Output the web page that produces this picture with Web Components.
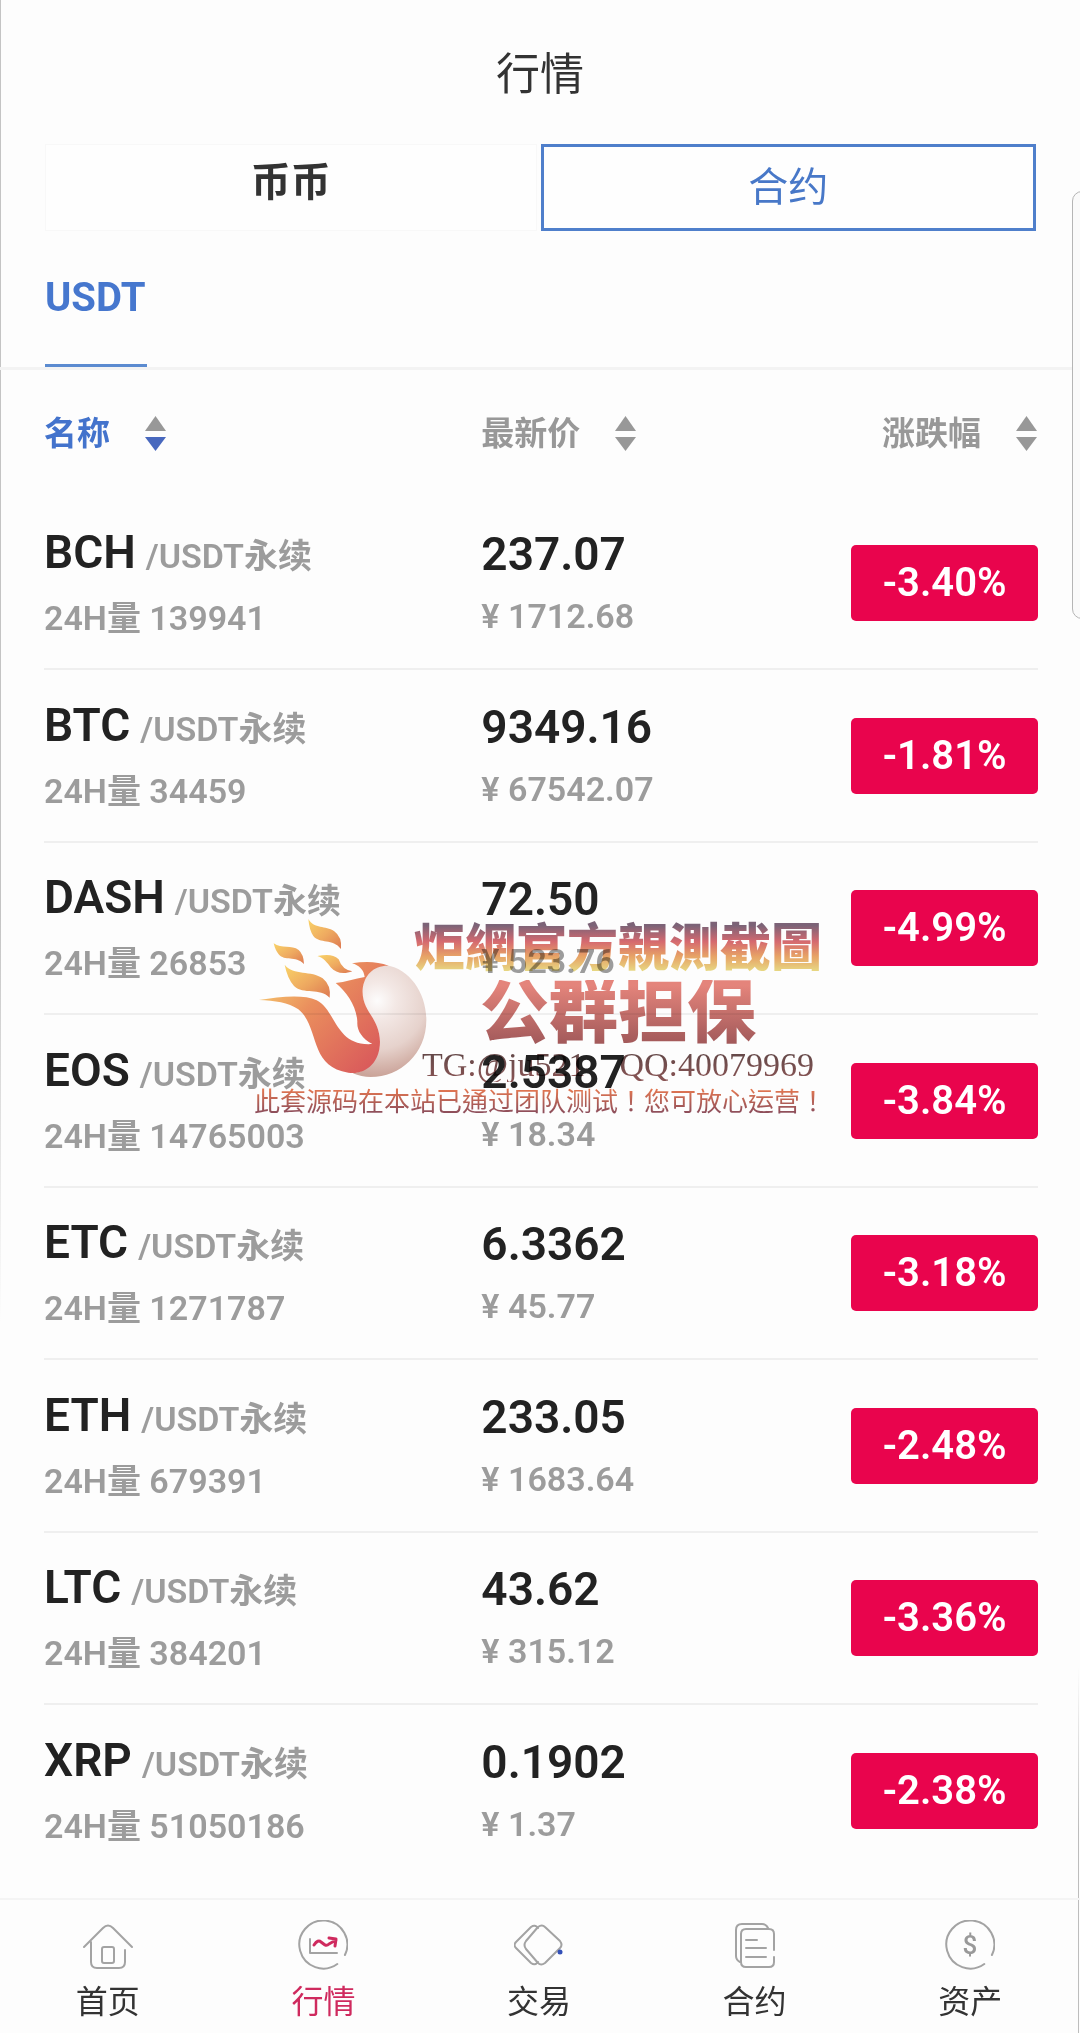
<!DOCTYPE html>
<html lang="zh-CN">
<head>
<meta charset="utf-8">
<meta name="viewport" content="width=device-width, initial-scale=1">
<title>行情</title>
<style>
  html { background: #fdfdfd; }
  body {
    margin: 0;
    background: #fdfdfd;
    color: #222;
    font-family: Roboto, "Noto Sans CJK SC", sans-serif;
  }
</style>
</head>
<body>
<market-app></market-app>
<script>
const define = (name, html, setup) => {
  const template = document.createElement('template');
  template.innerHTML = html;
  customElements.define(name, class extends HTMLElement {
    constructor() {
      super();
      this.attachShadow({ mode: 'open' }).append(template.content.cloneNode(true));
    }
    connectedCallback() { if (setup) setup(this, this.shadowRoot); }
  });
};

define('page-title', `
  <style>
    :host { display: block; }
    h1 { margin: 0; padding: 43px 0 37px; font-size: 44px; line-height: 64px; font-weight: 400; text-align: center; color: #333; }
  </style>
  <h1><slot></slot></h1>`);

define('market-switch', `
  <style>
    :host { display: flex; gap: 4px; margin: 0 44px 0 45px; }
    button {
      flex: 1; height: 87px; padding: 0; box-sizing: border-box;
      font: 400 40px/60px Roboto, "Noto Sans CJK SC", sans-serif;
      border: 1px solid #f8f8f8; background: #fefefe; color: #333;
    }
    button[aria-pressed="false"] { font-weight: 700; padding-bottom: 10px; }
    button[aria-pressed="true"] { border: 3px solid #4f7fcb; color: #4878c8; }
  </style>
  <button type="button" aria-pressed="false">币币</button><button type="button" aria-pressed="true">合约</button>`);

define('quote-tabs', `
  <style>
    :host { display: flex; padding: 0 45px; margin-top: 38px; border-bottom: 3px solid #f3f3f3; }
    button {
      height: 98px; padding: 0 2px 38px 0; border: 0; border-bottom: 3px solid #5b8bd0; background: none;
      font: 700 40px/56px Roboto, sans-serif; color: #4677ce;
    }
  </style>
  <button type="button"><slot></slot></button>`);

define('sort-button', `
  <style>
    :host { display: inline-flex; color: #989898; }
    :host([active]) { color: #4373cc; }
    button {
      display: flex; align-items: center; gap: 34px; padding: 0; border: 0; background: none; color: inherit;
      font: 700 33px/48px Roboto, "Noto Sans CJK SC", sans-serif;
    }
    svg { display: block; width: 23px; height: 36px; }
    .up, .down { fill: #989898; }
    :host([active]) .down { fill: #4868be; }
  </style>
  <button type="button"><span><slot></slot></span>
    <svg viewBox="0 0 23 36" aria-hidden="true"><path class="up" d="M11.5 0L22 15H1z"/><path class="down" d="M1 21H22L11.5 35z"/></svg>
  </button>`);

define('pair-name', `
  <style>
    :host { display: block; white-space: nowrap; }
    .name { display: flex; align-items: baseline; gap: 10px; font-size: 46px; line-height: 56px; font-weight: 600; color: #222; }
    .quote, .volume { font-size: 34px; font-weight: 600; color: #9c9c9c; }
    .volume { line-height: 48px; margin-top: 10px; }
  </style>
  <div class="name"><span class="base"></span><span class="quote">/USDT永续</span></div>
  <div class="volume"></div>`, (el, root) => {
    root.querySelector('.base').textContent = el.getAttribute('base');
    root.querySelector('.volume').textContent = '24H量 ' + el.getAttribute('volume');
  });

define('price-pair', `
  <style>
    :host { display: block; white-space: nowrap; }
    .last { font-size: 46px; line-height: 56px; font-weight: 600; color: #222; }
    .cny { font-size: 34px; line-height: 48px; margin-top: 10px; font-weight: 600; color: #9c9c9c; }
  </style>
  <div class="last"></div>
  <div class="cny"></div>`, (el, root) => {
    root.querySelector('.last').textContent = el.getAttribute('last');
    root.querySelector('.cny').textContent = '¥ ' + el.getAttribute('cny');
  });

define('change-badge', `
  <style>
    :host {
      display: inline-block; box-sizing: border-box; width: 187px; height: 76px; border-radius: 5px;
      background: #e9044d; color: #fff; text-align: center; font-size: 40px; line-height: 76px; font-weight: 600;
    }
  </style>
  <slot></slot>`);

define('market-table', `
  <style>
    :host { display: block; padding: 0 42px 0 44px; }
    table { width: 100%; border-collapse: separate; border-spacing: 0; table-layout: fixed; }
    th { height: 128px; padding: 0; text-align: left; vertical-align: middle; }
    th:nth-child(1) { width: 44%; }
    th:nth-child(2) { width: 34%; }
    th:last-child, td:last-child { text-align: right; }
    td { height: 170px; box-sizing: content-box; padding: 0; vertical-align: middle; border-bottom: 2px solid #efefef; }
    tr:nth-child(even) td { height: 171px; }
    td > * { vertical-align: middle; }
    tr:last-child td { border-bottom-color: transparent; }
  </style>
  <table>
    <thead><tr>
      <th scope="col"><sort-button active>名称</sort-button></th>
      <th scope="col"><sort-button>最新价</sort-button></th>
      <th scope="col"><sort-button>涨跌幅</sort-button></th>
    </tr></thead>
    <tbody></tbody>
  </table>`, (el, root) => {
    const rows = [
      ['BCH', '139941', '237.07', '1712.68', '-3.40%'],
      ['BTC', '34459', '9349.16', '67542.07', '-1.81%'],
      ['DASH', '26853', '72.50', '523.76', '-4.99%'],
      ['EOS', '14765003', '2.5387', '18.34', '-3.84%'],
      ['ETC', '1271787', '6.3362', '45.77', '-3.18%'],
      ['ETH', '679391', '233.05', '1683.64', '-2.48%'],
      ['LTC', '384201', '43.62', '315.12', '-3.36%'],
      ['XRP', '51050186', '0.1902', '1.37', '-2.38%']
    ];
    root.querySelector('tbody').innerHTML = rows.map(([base, volume, last, cny, change]) => `
      <tr>
        <td><pair-name base="${base}" volume="${volume}"></pair-name></td>
        <td><price-pair last="${last}" cny="${cny}"></price-pair></td>
        <td><change-badge>${change}</change-badge></td>
      </tr>`).join('');
  });

define('nav-item', `
  <style>
    :host { display: flex; flex: 1; justify-content: center; color: #333; }
    :host([active]) { color: #cf2a5e; }
    a {
      display: flex; flex-direction: column; align-items: center; gap: 8px; padding-top: 20px;
      color: inherit; text-decoration: none; font-size: 32px; line-height: 48px;
    }
  </style>
  <a href="#"><slot name="icon"></slot><span><slot></slot></span></a>`);

define('bottom-nav', `
  <style>
    :host { display: block; margin-top: auto; border-top: 2px solid #f4f4f4; }
    nav { display: flex; height: 133px; padding-right: 2px; }
    svg { display: block; width: 50px; height: 50px; fill: none; stroke: #a3a3a3; stroke-width: 2; stroke-linecap: round; stroke-linejoin: round; }
    svg text { font: 500 26px Roboto, sans-serif; fill: #999; stroke: none; text-anchor: middle; }
  </style>
  <nav>
    <nav-item>首页<svg slot="icon" viewBox="0 0 50 50"><path d="M1 27 20 8q5-5 10 0L49 27M8 22V42q0 6 6 6H36q6 0 6-6V30"/><rect x="19" y="27" width="12" height="16" rx="2"/></svg></nav-item>
    <nav-item active>行情<svg slot="icon" viewBox="0 0 50 50"><path d="M39.3 44A24 24 0 1 1 46.9 35"/><path d="M12 19V33H39"/><path stroke="#cf2a5e" stroke-width="3" d="M16 25Q20 19 23 22L27 25Q29 26 31 24L38 20M31 18L38 19L37 26"/></svg></nav-item>
    <nav-item>交易<svg slot="icon" viewBox="0 0 50 50"><path d="M24 8q-3-4-7-1L2 22q-3 3 0 6L17 43q4 3 7-1"/><path d="M24 7q4-3 7 0L46 21q3 4 0 7L31 43q-4 3-7 0L12 29q-3-4 0-8z"/><circle cx="46" cy="32" r="2.5" fill="#3350b8" stroke="none"/></svg></nav-item>
    <nav-item>合约<svg slot="icon" viewBox="0 0 50 50"><path d="M10 42q-4-2-4-6V10q0-6 6-6H32q4 0 6 4"/><path d="M44 30V14q0-5-5-5H16q-5 0-5 5V42q0 5 5 5H39q5 0 5-5V37M16 20H27M16 28H36M16 37H36"/></svg></nav-item>
    <nav-item>资产<svg slot="icon" viewBox="0 0 50 50"><path d="M39.3 44A24 24 0 1 1 46.9 35"/><text x="25" y="34">$</text></svg></nav-item>
  </nav>`);

define('flame-logo', `
  <style>
    :host { display: block; }
    svg { display: block; width: 170px; height: 160px; }
  </style>
  <svg viewBox="54 54 510 480" aria-hidden="true">
    <defs>
      <linearGradient id="fire" gradientUnits="userSpaceOnUse" x1="100" y1="180" x2="420" y2="480">
        <stop offset="0" stop-color="#fad36f"/><stop offset=".4" stop-color="#ec8f5e"/><stop offset="1" stop-color="#db5a5c"/>
      </linearGradient>
      <linearGradient id="spark" x1="0" y1="0" x2="1" y2="1">
        <stop offset="0" stop-color="#fbd568"/><stop offset=".5" stop-color="#f1ae62"/><stop offset="1" stop-color="#df7a52"/>
      </linearGradient>
      <radialGradient id="ball" gradientUnits="userSpaceOnUse" cx="412" cy="302" r="225">
        <stop offset="0" stop-color="#fffefe"/><stop offset=".25" stop-color="#f5eae7"/><stop offset=".65" stop-color="#e8d4ce"/><stop offset="1" stop-color="#cda69b"/>
      </radialGradient>
    </defs>
    <path fill="url(#ball)" d="M440 196C510 208 559 280 559 360C559 462 480 531 392 531Q364 531 338 520C390 512 420 470 420 425C418 350 365 340 368 270C370 230 392 196 440 196z"/>
    <path fill="url(#fire)" d="M57 300C120 290 190 282 230 301C290 332 285 440 397 432C365 415 350 390 352 365C350 320 320 275 287 249C315 247 345 236 374 231C372 210 357 196 336 190C375 183 412 184 446 197C400 196 372 226 368 268C364 335 418 350 420 425C420 490 375 525 325 518C205 500 240 380 175 328C145 307 105 302 57 300z"/>
    <path fill="url(#spark)" d="M134 194C160 228 215 210 248 235Q274 256 269 293C240 262 190 285 162 258Q142 235 134 194z"/>
    <path fill="url(#spark)" d="M101 130C125 148 155 134 176 150Q191 163 192 192C166 166 134 185 116 163Q106 151 101 130z"/>
    <path fill="url(#spark)" d="M205 57C223 88 257 76 282 93Q307 111 303 147C278 114 240 133 220 108Q208 91 205 57z"/>
    <path fill="url(#spark)" d="M232 168C258 164 280 162 296 178Q307 210 337 214C312 224 287 220 272 202C262 188 250 173 232 168z"/>
  </svg>`);

define('water-mark', `
  <style>
    :host {
      position: absolute; top: 918px; left: 0; right: 0; display: flex; flex-direction: column; align-items: center;
      mix-blend-mode: multiply; pointer-events: none; white-space: nowrap;
    }
    .top { display: flex; height: 164px; }
    .lines { display: flex; flex-direction: column; align-items: center; margin-left: -14px; }
    .lines > *, .note { background-clip: text; -webkit-background-clip: text; color: transparent; }
    .site { font-size: 51px; line-height: 62px; font-weight: 900; background-image: linear-gradient(#7d6478 12%, #d76a70 38%, #e9a467 62%, #e9df87 88%); }
    .group { font-size: 69px; line-height: 68px; font-weight: 900; background-image: linear-gradient(#e6857c 8%, #a35a5b 94%); }
    .contact { font: 34px/34px "Liberation Serif", serif; background-image: linear-gradient(#5d4646, #8c5555); white-space: pre; }
    .note { font: 26px/36px "Noto Sans CJK TC", sans-serif; background-image: linear-gradient(#ec7b50 15%, #8e4e5c 85%); }
  </style>
  <div class="top">
    <flame-logo></flame-logo>
    <div class="lines">
      <div class="site" lang="zh-TW">炬網官方親測截圖</div>
      <div class="group">公群担保</div>
      <div class="contact">TG:@ju521    QQ:40079969</div>
    </div>
  </div>
  <div class="note" lang="zh-TW">此套源码在本站已通过团队测试！您可放心运营！</div>`);

define('edge-panel', `
  <style>
    :host {
      position: absolute; top: 191px; right: -12px; width: 20px; height: 428px; box-sizing: border-box;
      border: 1px solid #b5b5b5; border-radius: 12px; background: #fafafa;
    }
  </style>`);

define('market-app', `
  <style>
    :host {
      position: relative; display: flex; flex-direction: column; min-height: 100vh; overflow: hidden;
      box-sizing: border-box;
      background:
        linear-gradient(#c4c4c4 45%, transparent 65%) left / 1px 100% no-repeat,
        linear-gradient(transparent 82%, #bdbdbd 90%) right 1px top / 1px 100% no-repeat,
        #fdfdfd;
    }
  </style>
  <page-title>行情</page-title>
  <market-switch></market-switch>
  <quote-tabs>USDT</quote-tabs>
  <market-table></market-table>
  <bottom-nav></bottom-nav>
  <water-mark></water-mark>
  <edge-panel></edge-panel>`);
</script>
</body>
</html>
